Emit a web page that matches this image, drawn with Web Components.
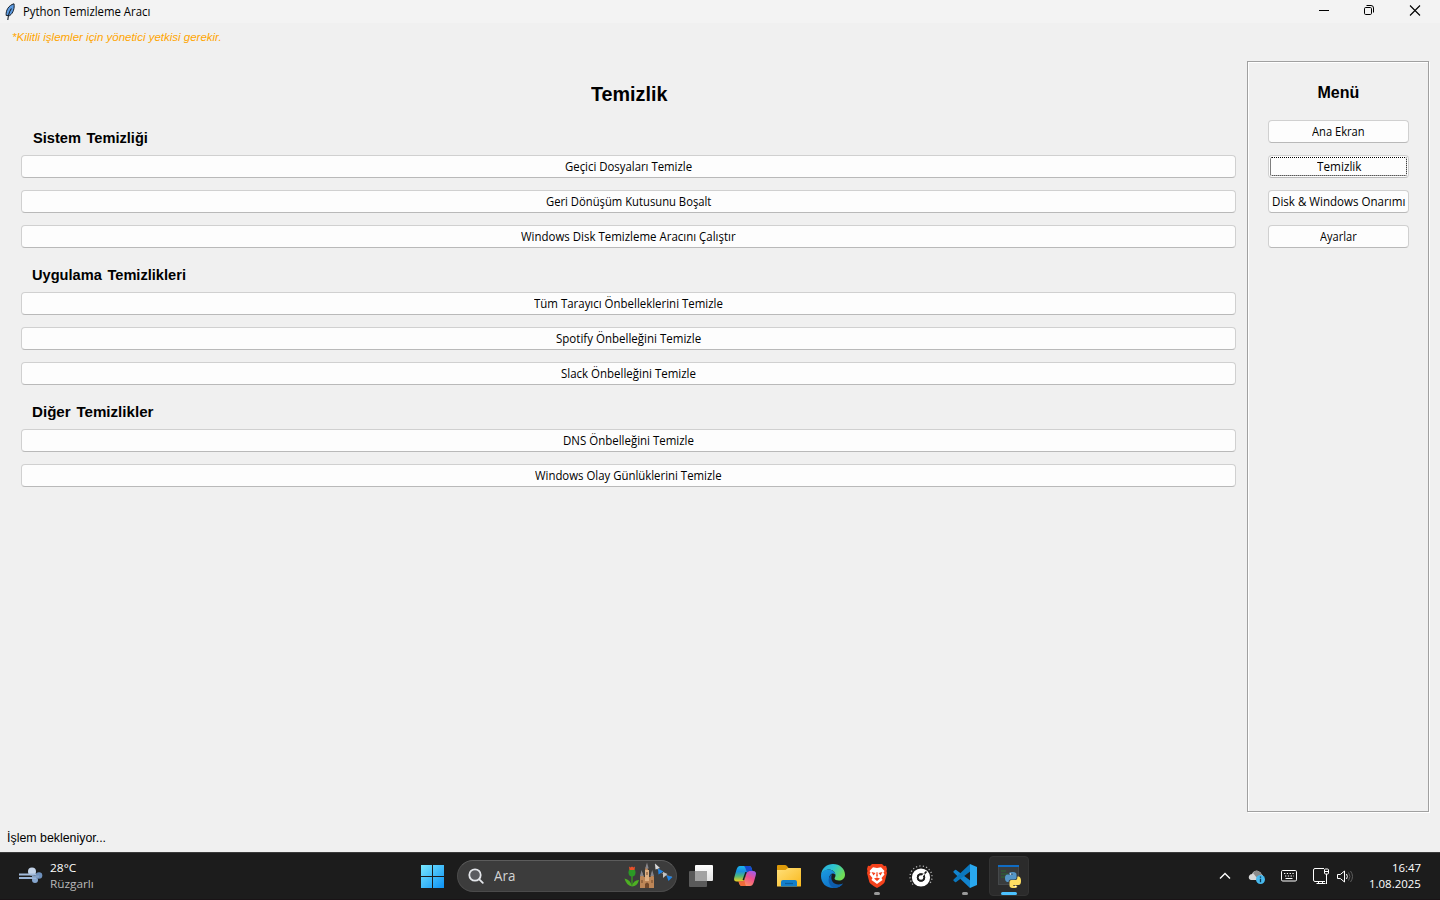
<!DOCTYPE html>
<html lang="tr">
<head>
<meta charset="utf-8">
<title>Python Temizleme Aracı</title>
<style>
    html, body {
        margin: 0;
        height: 100%;
        overflow: hidden;
        background: #f0f0f0;
    }
</style>
</head>
<body>
<desktop-screen></desktop-screen>

<script>
// Text squeezed or stretched to a given width
class FitText extends HTMLElement {
    constructor() {
        super();
        this.root = this.attachShadow({ mode: 'open' });
        this.root.innerHTML = `
        <style>
            :host {
                display: block;
                white-space: nowrap;
            }
            span {
                display: inline-block;
                transform-origin: 0 50%;
            }
        </style>
        <span><slot></slot></span>
        `;
    }

    connectedCallback() {
        const width = Number(this.getAttribute('width'));
        const span = this.root.querySelector('span');
        this.style.width = width + 'px';
        requestAnimationFrame(() => {
            span.style.transform = `scaleX(${width / span.offsetWidth})`;
        });
    }
}

class TitleBar extends HTMLElement {
    constructor() {
        super();
        this.root = this.attachShadow({ mode: 'open' });
        this.root.innerHTML = `
        <style>
            :host {
                display: flex;
                align-items: center;
                justify-content: space-between;
                height: 23px;
                background: #f3f3f3;
                color: #000;
                font: 12px/22px "Open Sans", "Noto Sans", sans-serif;
            }
            .left {
                display: flex;
                align-items: center;
                gap: 6px;
                padding-left: 3px;
            }
            svg {
                display: block;
            }
            .controls {
                display: grid;
                grid-template-columns: 46px 45px 46px;
                margin-right: 2px;
                padding-bottom: 2px;
                justify-items: center;
            }
        </style>
        <div class="left">
            <svg width="14" height="18" viewBox="0 0 14 18">
                <path d="M3.200 12.500C2.600 7.500 5.500 2.300 11 .800c.700 4-.600 9.200-4.300 11.800z" fill="#5c9ae0" stroke="#16202c" stroke-width="1"/>
                <path d="M8.500 5.500C6.500 8 5.300 11 4.800 17" fill="none" stroke="#16202c" stroke-width="1.100"/>
            </svg>
            <fit-text width="127">Python Temizleme Aracı</fit-text>
        </div>
        <div class="controls">
            <svg width="12" height="12"><path d="M1 5.500h10" stroke="#000"/></svg>
            <svg width="12" height="12" fill="none" stroke="#000">
                <rect x=".500" y="2.500" width="7" height="7" rx="1.200"/>
                <path d="M2.500 .500h4.500a2.500 2.500 0 0 1 2.500 2.500v4.500"/>
            </svg>
            <svg width="12" height="12"><path d="M1 .500l10 10M11 .500l-10 10" stroke="#000" stroke-width="1.100"/></svg>
        </div>
        `;
    }
}

class TkButton extends HTMLElement {
    connectedCallback() {
        if (this.shadowRoot) return;
        this.root = this.attachShadow({ mode: 'open' });
        this.root.innerHTML = `
        <style>
            :host {
                display: block;
                height: 23px;
            }
            button {
                display: flex;
                align-items: center;
                justify-content: center;
                box-sizing: border-box;
                width: 100%;
                height: 23px;
                margin: 0;
                padding: 0 0 1px;
                background: #fdfdfd;
                border: 1px solid #d0d0d0;
                border-bottom-color: #b9b9b9;
                border-radius: 4px;
                color: #000;
                font: 12px/20px "Open Sans", "Noto Sans", sans-serif;
            }
            :host([focused]) button {
                outline: 1px dotted #000;
                outline-offset: -3px;
            }
            fit-text {
                text-align: left;
                padding-top: 1px;
            }
        </style>
        <button><fit-text width="${this.getAttribute('text-width')}">${this.getAttribute('label')}</fit-text></button>
        `;
    }
}

class CleanSection extends HTMLElement {
    constructor() {
        super();
        this.root = this.attachShadow({ mode: 'open' });
        this.root.innerHTML = `
        <style>
            :host {
                display: block;
            }
            .heading {
                padding-left: 11px;
                height: 26px;
                font: bold 15px/18px "Liberation Sans", Arial, sans-serif;
                word-spacing: 1.5px;
            }
            .buttons {
                display: grid;
                gap: 12px;
            }
        </style>
        <div class="heading"><slot name="heading"></slot></div>
        <div class="buttons"><slot></slot></div>
        `;
    }
}

class SideMenu extends HTMLElement {
    constructor() {
        super();
        this.root = this.attachShadow({ mode: 'open' });
        this.root.innerHTML = `
        <style>
            :host {
                display: flex;
                flex-direction: column;
                gap: 12px;
                box-sizing: border-box;
                padding: 21px 19px 0 20px;
                border: 1px solid #a0a0a0;
                box-shadow: 1px 1px 0 #fff, inset 1px 1px 0 #fff;
            }
            .heading {
                display: flex;
                justify-content: center;
                height: 25px;
                font: bold 16px/20px "Liberation Sans", Arial, sans-serif;
            }
        </style>
        <div class="heading"><fit-text width="42">Menü</fit-text></div>
        <tk-button label="Ana Ekran" text-width="53"></tk-button>
        <tk-button label="Temizlik" text-width="44" focused></tk-button>
        <tk-button label="Disk &amp;amp; Windows Onarımı" text-width="133"></tk-button>
        <tk-button label="Ayarlar" text-width="37"></tk-button>
        `;
    }
}

class AppWindow extends HTMLElement {
    constructor() {
        super();
        this.root = this.attachShadow({ mode: 'open' });
        this.root.innerHTML = `
        <style>
            :host {
                display: grid;
                grid-template-rows: 23px 38px 751px 40px;
                background: #f0f0f0;
                color: #000;
            }
            .note {
                padding: 6px 0 0 12px;
                color: #ffa500;
                font: italic 11px/16px "Liberation Sans", Arial, sans-serif;
            }
            .content {
                display: grid;
                grid-template-columns: 1215px 182px;
                gap: 11px;
                padding-left: 21px;
            }
            h1 {
                display: flex;
                justify-content: center;
                margin: 0;
                padding-top: 21px;
                height: 47px;
                font: bold 20px/24px "Liberation Sans", Arial, sans-serif;
            }
            .sections {
                display: grid;
                gap: 18px;
            }
            .first {
                padding-left: 1px;
            }
            .status {
                padding: 17px 0 0 7px;
                font: 12px/18px "Liberation Sans", Arial, sans-serif;
            }
        </style>
        <title-bar></title-bar>
        <div class="note"><fit-text width="210">*Kilitli işlemler için yönetici yetkisi gerekir.</fit-text></div>
        <div class="content">
            <div>
                <h1><fit-text width="76">Temizlik</fit-text></h1>
                <div class="sections">
                    <clean-section>
                        <fit-text slot="heading" class="first" width="115">Sistem Temizliği</fit-text>
                        <tk-button label="Geçici Dosyaları Temizle" text-width="127"></tk-button>
                        <tk-button label="Geri Dönüşüm Kutusunu Boşalt" text-width="165"></tk-button>
                        <tk-button label="Windows Disk Temizleme Aracını Çalıştır" text-width="215"></tk-button>
                    </clean-section>
                    <clean-section>
                        <fit-text slot="heading" width="154">Uygulama Temizlikleri</fit-text>
                        <tk-button label="Tüm Tarayıcı Önbelleklerini Temizle" text-width="189"></tk-button>
                        <tk-button label="Spotify Önbelleğini Temizle" text-width="145"></tk-button>
                        <tk-button label="Slack Önbelleğini Temizle" text-width="135"></tk-button>
                    </clean-section>
                    <clean-section>
                        <fit-text slot="heading" width="121">Diğer Temizlikler</fit-text>
                        <tk-button label="DNS Önbelleğini Temizle" text-width="131"></tk-button>
                        <tk-button label="Windows Olay Günlüklerini Temizle" text-width="187"></tk-button>
                    </clean-section>
                </div>
            </div>
            <side-menu></side-menu>
        </div>
        <div class="status"><fit-text width="99">İşlem bekleniyor...</fit-text></div>
        `;
    }
}

class TaskSearch extends HTMLElement {
    constructor() {
        super();
        this.root = this.attachShadow({ mode: 'open' });
        this.root.innerHTML = `
        <style>
            :host {
                display: flex;
                align-items: center;
                box-sizing: border-box;
                width: 220px;
                height: 32px;
                padding-left: 10px;
                border: 1px solid #4b4b4b;
                border-top-color: #5c5c5c;
                border-radius: 16px;
                background: #3c3c3c;
                color: #d4d4d4;
                font: 14px/20px "Open Sans", "Noto Sans", sans-serif;
            }
            fit-text {
                margin-left: 10px;
            }
            .art {
                margin-left: auto;
                margin-right: 2px;
            }
        </style>
        <svg width="16" height="16" fill="#5b5c60" stroke="#e4e6ea" stroke-width="1.800" stroke-linecap="round">
            <circle cx="7" cy="7" r="5.700"/>
            <path d="M11.300 11.300l3.500 3.500"/>
        </svg>
        <fit-text width="21">Ara</fit-text>
        <svg class="art" width="50" height="28" viewBox="0 0 50 28">
            <path d="M8 14v10" stroke="#3a8e22" stroke-width="1.500"/>
            <ellipse cx="8" cy="10.500" rx="3.500" ry="4" fill="#2b9a25"/>
            <path d="M5 4.500l1.500 1 1.500-1 1.500 1 1.500-1-.5 3.500h-5z" fill="#e8502a"/>
            <path d="M8 24.500Q2 23 .500 16.500q6 1 7.500 8zM8 24.500q5.500-.5 7-6.500-6 0-7 6.500z" fill="#4db023"/>
            <path d="M16 26V15l2-5 2 5h1V8l1.500-6L24 8v5l1 2h1.500l1.500-5 2 5v11z" fill="#bd8657"/>
            <path d="M16 14l1.500-6L19.500 14zM21.300 6.500L23 .500l1.700 6zM26.500 14l1.700-6 1.800 6z" fill="#85858c"/>
            <path d="M21 8h4v11h-4z" fill="#dfb083"/>
            <path d="M21 26v-4q2-3 4 0v4zM17.500 18h1v3h-1zM27.500 18h1v3h-1zM22.500 10h1v3h-1z" fill="#72482a"/>
            <path d="M31 2q4 11 17 13" fill="none" stroke="#888" stroke-width=".8"/>
            <path d="M31 1.500l5 4.500-4.500 1.500z" fill="#d8d8d8"/>
            <path d="M34 6.500l5.500 3-5 3z" fill="#1d83e6"/>
            <path d="M39 10l4.500 2-4.500 4z" fill="#c4c4c4"/>
            <path d="M42.500 13.500l6 1.500-4 4z" fill="#1d83e6"/>
        </svg>
        `;
    }
}

// One 44px slot of the taskbar; the icon is slotted in
class TaskIcon extends HTMLElement {
    constructor() {
        super();
        this.root = this.attachShadow({ mode: 'open' });
        this.root.innerHTML = `
        <style>
            :host {
                display: grid;
                place-items: center;
                position: relative;
                width: 44px;
                height: 48px;
            }
            .tile {
                display: grid;
                place-items: center;
                box-sizing: border-box;
                width: 40px;
                height: 40px;
                border-radius: 4px;
            }
            :host([active]) .tile {
                background: #2b2b2b;
                border: 1px solid #333;
            }
            .mark {
                display: none;
                position: absolute;
                left: 19px;
                bottom: 5px;
                width: 6px;
                height: 3px;
                border-radius: 2px;
                background: #9a9a9a;
            }
            :host([running]) .mark {
                display: block;
            }
            :host([active]) .mark {
                display: block;
                left: 14px;
                width: 16px;
                background: #4cc2ff;
            }
        </style>
        <div class="tile"><slot></slot></div>
        <div class="mark"></div>
        `;
    }
}

class TaskBar extends HTMLElement {
    constructor() {
        super();
        this.root = this.attachShadow({ mode: 'open' });
        this.root.innerHTML = `
        <style>
            :host {
                display: grid;
                grid-template-columns: 410px 621px 1fr;
                box-sizing: border-box;
                height: 48px;
                border-top: 1px solid #3a3a3a;
                border-bottom: 1px solid #191316;
                background: #1c1c1c;
                color: #fff;
                font: 11px/16px "Open Sans", "Noto Sans", sans-serif;
            }
            svg {
                display: block;
            }
            .weather, .apps, .tray {
                display: flex;
                align-items: center;
                height: 46px;
            }
            .weather {
                gap: 7px;
                padding-left: 18px;
            }
            .desc {
                color: #b8b8b8;
            }
            .apps task-search {
                margin: 0 2px 0 3px;
            }
            .tray {
                padding-left: 187px;
            }
            .clock {
                display: grid;
                justify-items: end;
                margin-left: 15px;
            }
        </style>
        <div class="weather">
            <svg width="25" height="18" viewBox="0 0 25 18">
                <defs>
                    <linearGradient id="wind" x2="1"><stop stop-color="#86a5cc"/><stop offset="1" stop-color="#b8cde8"/></linearGradient>
                </defs>
                <circle cx="14" cy="4.500" r="4" fill="#c3d3e8"/>
                <circle cx="21" cy="8.500" r="3.300" fill="#6e90bc"/>
                <circle cx="17" cy="13" r="3" fill="#86a6cf"/>
                <rect x="1" y="6.500" width="17" height="2" fill="#a3bcdc"/>
                <rect x="1" y="10" width="17" height="2" fill="#9cb6d8"/>
                <path d="M14 9.500h7" stroke="#84a1c5" stroke-width="2"/>
            </svg>
            <div>
                <fit-text width="26">28°C</fit-text>
                <fit-text class="desc" width="44">Rüzgarlı</fit-text>
            </div>
        </div>
        <div class="apps">
            <task-icon>
                <svg width="24" height="24">
                    <defs>
                        <linearGradient id="win" x1="0" y1="0" x2="24" y2="24" gradientUnits="userSpaceOnUse"><stop stop-color="#7cebff"/><stop offset="1" stop-color="#0c91f4"/></linearGradient>
                    </defs>
                    <path d="M1 1h11v11H1zM13 1h11v11H13zM1 13h11v11H1zM13 13h11v11H13z" fill="url(#win)"/>
                </svg>
            </task-icon>
            <task-search></task-search>
            <task-icon>
                <svg width="24" height="24">
                    <defs>
                        <linearGradient id="tv" x2="0" y2="1"><stop stop-color="#fff"/><stop offset="1" stop-color="#e1e1e1"/></linearGradient>
                    </defs>
                    <rect x="6" y="1" width="18" height="16" rx="1" fill="url(#tv)"/>
                    <rect x="0" y="7" width="18" height="16" rx="1" fill="#5a5a5a"/>
                    <path d="M6 7h12v10H6z" fill="#a2a2a2"/>
                </svg>
            </task-icon>
            <task-icon>
                <svg width="24" height="24" viewBox="0 0 24 24">
                    <defs>
                        <linearGradient id="cpa" x2="0" y2="1"><stop stop-color="#1bb4eb"/><stop offset=".35" stop-color="#1a8fe0"/><stop offset=".65" stop-color="#4fb87a"/><stop offset="1" stop-color="#f4d01c"/></linearGradient>
                        <linearGradient id="cpb" x1=".8" x2=".2" y2="1"><stop stop-color="#a35be6"/><stop offset=".4" stop-color="#ee4f8d"/><stop offset="1" stop-color="#ffa25a"/></linearGradient>
                    </defs>
                    <path d="M7 2h9q2 0 2.600 2l.800 3h-3q-2 0-2.600 2l-2.300 6.500Q10.800 17.500 8.500 17.500H4q-4 0-2.600-4.500l2-7Q4.500 2 7 2z" fill="url(#cpa)"/>
                    <path d="M17 22H9q-2 0-2.600-2l-.900-2.500H9q2 0 2.700-2.500l1.800-6Q14.200 7 16.500 7H20q4 0 2.700 4.500l-2 7Q19.500 22 17 22z" fill="url(#cpb)"/>
                    <path d="M11 2h5q2 0 2.600 2l.800 3h-3.200q-1.700 0-2.300 1.800Q12.500 3 11 2z" fill="#1748cf"/>
                    <path d="M13 22H9q-2 0-2.600-2l-.900-2.500H9q1.500 0 2.300-1.500Q12 20 13 22z" fill="#f06a38"/>
                    <path d="M13.800 8L11 16h-1.500l2.800-8z" fill="#1c1c1c"/>
                </svg>
            </task-icon>
            <task-icon>
                <svg width="24" height="24" viewBox="0 0 24 24">
                    <defs>
                        <linearGradient id="fold" x2="1" y2="1"><stop stop-color="#ffe07a"/><stop offset="1" stop-color="#f9b81c"/></linearGradient>
                    </defs>
                    <path d="M0 2q0-1 1-1h7q1 0 2 1l1.500 2H24v5H0z" fill="#dd9a09"/>
                    <path d="M0 6h8.500L11 4h12q1 0 1 1v17q0 .600-.600.600H.600Q0 22.600 0 22z" fill="url(#fold)"/>
                    <path d="M4 22.600V18q0-2 2-2h12q2 0 2 2v4.600z" fill="#137fca"/>
                    <path d="M8 19.500h8" stroke="#0b5d9c" stroke-width="1.300"/>
                </svg>
            </task-icon>
            <task-icon>
                <svg width="24" height="24" viewBox="0 0 24 24">
                    <defs>
                        <linearGradient id="edgeTop" x2="1" y2=".5"><stop stop-color="#28a7df"/><stop offset=".5" stop-color="#2dc5cf"/><stop offset="1" stop-color="#70dd55"/></linearGradient>
                        <linearGradient id="edgeBot" x2=".6" y2="1"><stop stop-color="#1b9de2"/><stop offset="1" stop-color="#0f6fc6"/></linearGradient>
                    </defs>
                    <path d="M0 11C1 3.500 6 0 12 0c7 0 12 5 12 10.500 0 4-3 6-6 6-2.500 0-4.500-1-4.500-2 0-.700 1-1.300 1-3C14.500 7 10 5 7 5.500 3.500 6 1 8.500 0 11z" fill="url(#edgeTop)"/>
                    <path d="M0 12C0 8 3.500 5.500 7.500 5.500c4 0 7 2.500 7 6 0-1-1-2-2.500-2-2 0-4 2-4 5 0 4 3.500 6.500 8 6.500 2.500 0 4.500-.700 6-1.600C20 22.500 16.500 24 12 24 5 24 0 19 0 12z" fill="url(#edgeBot)"/>
                    <path d="M11 10c-4.500 3-5 10.500 1.500 14 4 0 7-1.700 9.500-4.600-6 3-14-.4-11-9.400z" fill="#0e5dad"/>
                </svg>
            </task-icon>
            <task-icon running>
                <svg width="24" height="24" viewBox="0 0 24 24">
                    <path d="M7 0h10l2 2 2-.200L22 5l-.500 2 .500 2-2.300 9Q19 20 12 24 5 20 4.300 18L2 9l.500-2L2 5l1-3.200L5 2z" fill="#f5421c"/>
                    <path d="M12 4l4-.700L19.500 7l-1 1.500 1 2-3 3.500 1 2L12 20l-5.500-4 1-2-3-3.500 1-2-1-1.500L8 3.300z" fill="#fff"/>
                    <path d="M6.500 8l4 1-2 2.500zM17.500 8l-4 1 2 2.500zM9 14.500l3-1 3 1-3 2.500zM11.600 8h.800l.500 4.500h-1.800z" fill="#f5421c"/>
                </svg>
            </task-icon>
            <task-icon>
                <svg width="24" height="24" viewBox="0 0 24 24">
                    <path d="M4 20.500A11 11 0 1 1 20 20.500" fill="none" stroke="#b5b5b5" stroke-width="1.300" stroke-dasharray="1.200 2.200"/>
                    <circle cx="12" cy="13.500" r="6.600" fill="none" stroke="#fff" stroke-width="5"/>
                    <circle cx="12" cy="13.500" r="4.200" fill="#1c1c1c"/>
                    <path d="M12.500 13L17.500 7.500" stroke="#1c1c1c" stroke-width="1.800"/>
                    <circle cx="12" cy="13.500" r="2.300" fill="#fff"/>
                    <path d="M12 13.500l3.500-4" stroke="#fff" stroke-width="1.200"/>
                </svg>
            </task-icon>
            <task-icon running>
                <svg width="24" height="24" viewBox="0 0 24 24">
                    <path d="M17 24L.600 8.500q-.600-.700 0-1.200L2 6q.600-.400 1.200 0l15.300 11.500z" fill="#1284cf"/>
                    <path d="M17 0L.600 15.500q-.600.700 0 1.200L2 18q.600.400 1.200 0L18.500 6.500z" fill="#0b77bd"/>
                    <path d="M17 0l7 3v18l-7 3z" fill="#29a8ef"/>
                </svg>
            </task-icon>
            <task-icon active>
                <svg width="24" height="24" viewBox="0 0 24 24">
                    <path d="M1 1h21v20H1z" fill="#45484a"/>
                    <path d="M2 3h19v17H2z" fill="#393c3d"/>
                    <path d="M1 1h21v2H1z" fill="#0f6cc4"/>
                    <path d="M4 7h5M4 10h7M4 13h4" stroke="#315a35" stroke-width="1.300"/>
                    <path d="M15.500 8q4-.200 4 2.500v3q0 2-2 2h-4q-2 0-2 2.500h-1.300q-2.200-.500-2.200-4t2.500-3.500h5.300v-.700h-4V10q0-2 3.700-2z" fill="#5596c8"/>
                    <path d="M16.500 24q-4 .200-4-2.500v-3.500q0-2 2-2h4q2 0 2-3.500h1.300q2.200.500 2.200 4.500T21.500 21h-5.300v.700h4v.800q-.200 1.500-3.700 1.500z" fill="#ffdf62"/>
                    <circle cx="13.500" cy="10" r=".7" fill="#fff"/>
                    <circle cx="18.500" cy="22.300" r=".7" fill="#fff"/>
                </svg>
            </task-icon>
        </div>
        <div class="tray">
            <svg width="14" height="10"><path d="M2 7.500l5-5 5 5" fill="none" stroke="#fff" stroke-width="1.400"/></svg>
            <svg width="18" height="16" style="margin: 2px 0 0 16px">
                <path d="M3 11Q0 10 1 7q1-2 3-2 2-4 6-3 3 1 3.500 3 2 1 1.500 4v2z" fill="#d8d8d8"/>
                <path d="M5 4q3-4 6-1.500Q14 4 14 8l-5 1z" fill="#8b8b8b"/>
                <circle cx="12.500" cy="10.500" r="4.500" fill="#47b9ee"/>
                <path d="M12.500 7.500v1.200M12.500 9.700v3.600" stroke="#0b3652" stroke-width="1.300"/>
            </svg>
            <svg width="16" height="12" style="margin-left: 15px" fill="none" stroke="#fff">
                <rect x=".500" y=".500" width="15" height="10.500" rx="1.200"/>
                <path d="M3 3.500h10M4 6h9" stroke-dasharray="1.300 1.500"/>
                <path d="M4.500 8.500h7"/>
            </svg>
            <svg width="17" height="17" style="margin-left: 16px" fill="none" stroke="#fff">
                <path d="M11 .500H2Q.500 .500.500 2v10q0 1.500 1.500 1.500h10M5.500 13.500v2M9.500 13.500v2M3.500 15.500h9"/>
                <rect x="11.500" y="1" width="4" height="5" rx="1"/>
                <path d="M13.500 6v10M11.500 3.500h4"/>
            </svg>
            <svg width="17" height="15" style="margin-left: 7px" fill="none" stroke="#fff">
                <path d="M.500 5.500h2.800L7.500 2v11L3.300 9.500H.500z"/>
                <path d="M9.500 5q1.700 2.500 0 5"/>
                <path d="M11.500 3.500q3 4 0 8M13.500 2q4 5.500 0 11" stroke="#5e5e5e"/>
            </svg>
            <div class="clock">
                <fit-text width="29">16:47</fit-text>
                <fit-text width="52">1.08.2025</fit-text>
            </div>
        </div>
        `;
    }
}

class DesktopScreen extends HTMLElement {
    constructor() {
        super();
        this.root = this.attachShadow({ mode: 'open' });
        this.root.innerHTML = `
        <style>
            :host {
                display: grid;
                grid-template-rows: 852px 48px;
                width: 1440px;
                height: 900px;
            }
        </style>
        <app-window></app-window>
        <task-bar></task-bar>
        `;
    }
}

customElements.define('fit-text', FitText);
customElements.define('title-bar', TitleBar);
customElements.define('tk-button', TkButton);
customElements.define('clean-section', CleanSection);
customElements.define('side-menu', SideMenu);
customElements.define('app-window', AppWindow);
customElements.define('task-search', TaskSearch);
customElements.define('task-icon', TaskIcon);
customElements.define('task-bar', TaskBar);
customElements.define('desktop-screen', DesktopScreen);
</script>
</body>
</html>
